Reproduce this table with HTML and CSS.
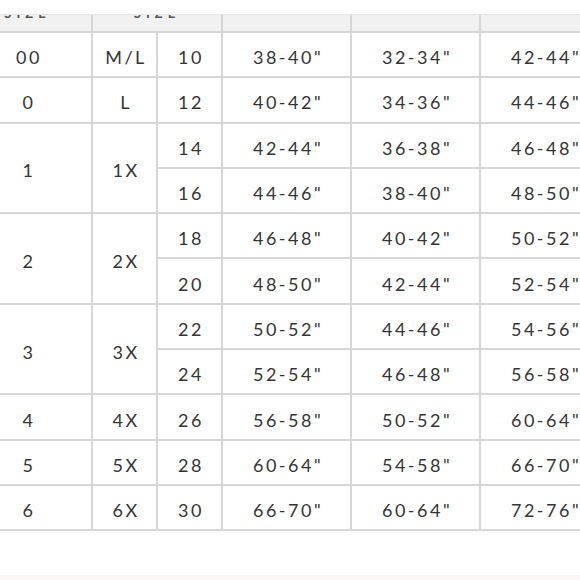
FILE: index.html
```html
<!DOCTYPE html>
<html>
<head>
<meta charset="utf-8">
<link rel="stylesheet" href="styles.css">
</head>
<body>
<div class="clip">
  <table class="chart">
    <colgroup>
      <col class="w-wide"><col class="w-narrow"><col class="w-narrow"><col class="w-wide"><col class="w-wide"><col class="w-wide">
    </colgroup>
    <thead>
      <tr class="head">
        <th>SIZE</th><th colspan="2">SIZE</th><th></th><th></th><th></th>
      </tr>
    </thead>
    <tbody>
      <tr><td>00</td><td>M/L</td><td>10</td><td>38-40"</td><td>32-34"</td><td>42-44"</td></tr>
      <tr><td>0</td><td>L</td><td>12</td><td>40-42"</td><td>34-36"</td><td>44-46"</td></tr>
      <tr><td rowspan="2">1</td><td rowspan="2">1X</td><td>14</td><td>42-44"</td><td>36-38"</td><td>46-48"</td></tr>
      <tr><td>16</td><td>44-46"</td><td>38-40"</td><td>48-50"</td></tr>
      <tr><td rowspan="2">2</td><td rowspan="2">2X</td><td>18</td><td>46-48"</td><td>40-42"</td><td>50-52"</td></tr>
      <tr><td>20</td><td>48-50"</td><td>42-44"</td><td>52-54"</td></tr>
      <tr><td rowspan="2">3</td><td rowspan="2">3X</td><td>22</td><td>50-52"</td><td>44-46"</td><td>54-56"</td></tr>
      <tr><td>24</td><td>52-54"</td><td>46-48"</td><td>56-58"</td></tr>
      <tr><td>4</td><td>4X</td><td>26</td><td>56-58"</td><td>50-52"</td><td>60-64"</td></tr>
      <tr><td>5</td><td>5X</td><td>28</td><td>60-64"</td><td>54-58"</td><td>66-70"</td></tr>
      <tr><td>6</td><td>6X</td><td>30</td><td>66-70"</td><td>60-64"</td><td>72-76"</td></tr>
    </tbody>
  </table>
</div>
<div class="spacer"></div>
<div class="footer-band"></div>
</body>
</html>
```

FILE: styles.css
```css
html, body {
  margin: 0;
  padding: 0;
  background: #ffffff;
  overflow: hidden;
  height: 580px;
}
.clip {
  margin-top: 14px;
  border-top: 1px solid #e6e6e6;
  overflow: hidden;
  width: 580px;
}
.chart {
  border-collapse: collapse;
  table-layout: fixed;
  width: 644px;
  margin-left: -38px;
  margin-top: -24px;
  font-family: Lato, "Open Sans", sans-serif;
  color: #353535;
}
.w-wide { width: 129px; }
.w-narrow { width: 65px; }
.chart th, .chart td {
  border: 2px solid #d6d6d6;
  text-align: center;
  padding: 0;
}
.head th {
  height: 40px;
  background: #f1f1f1;
  vertical-align: bottom;
  font-size: 13px;
  font-weight: 700;
  letter-spacing: 5px;
  color: #555555;
  padding-bottom: 11px;
  line-height: 13px;
  box-sizing: border-box;
}
.chart td {
  height: 45.3px;
  font-size: 18px;
  letter-spacing: 2.5px;
  line-height: 20px;
  padding-top: 5px;
  padding-left: 3px;
  box-sizing: border-box;
}
.spacer {
  height: 44px;
}
.footer-band {
  height: 10px;
  background: #fcf6f7;
}
```
